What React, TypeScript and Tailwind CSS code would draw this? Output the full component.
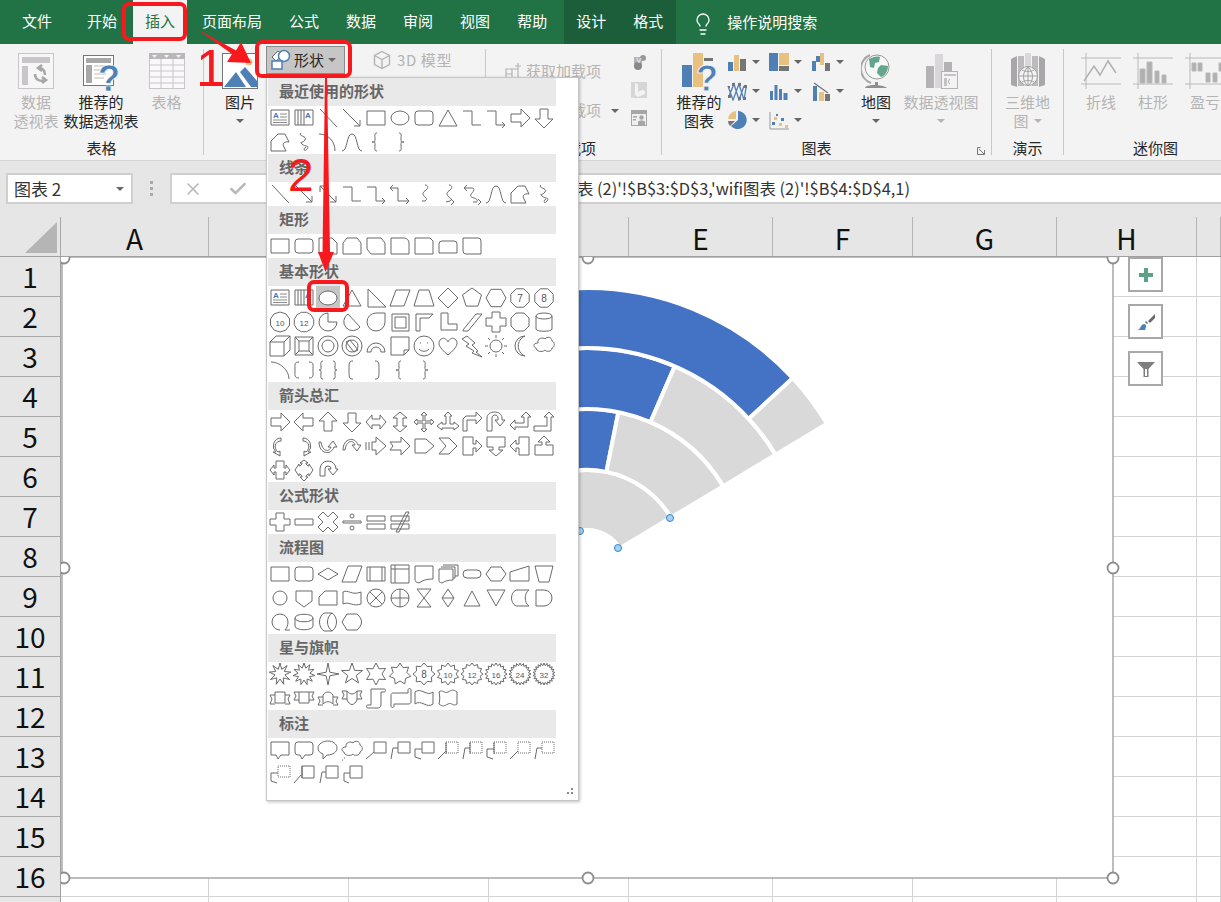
import React from "react";
import { Check, Lightbulb, X } from "lucide-react";

const BLUE = "#4e80b6";
const TAN = "#e8c07f";
const DARK = "#757575";

type Sh = string | { d: string; t?: string; dash?: string; tb?: boolean; fill?: boolean };

function poly(n: number, r = 9, rot = -90, cx = 12, cy = 12) {
  let d = "";
  for (let i = 0; i < n; i++) {
    const a = ((rot + (360 / n) * i) * Math.PI) / 180;
    d += `${i ? "L" : "M"}${(cx + r * Math.cos(a)).toFixed(1)} ${(cy + r * Math.sin(a)).toFixed(1)}`;
  }
  return d + "z";
}

function star(n: number, ro = 10, ri = 6) {
  let d = "";
  for (let i = 0; i < n * 2; i++) {
    const a = ((-90 + (180 / n) * i) * Math.PI) / 180;
    const r = i % 2 ? ri : ro;
    d += `${i ? "L" : "M"}${(12 + r * Math.cos(a)).toFixed(1)} ${(12 + r * Math.sin(a)).toFixed(1)}`;
  }
  return d + "z";
}

const circle = (r: number, cx = 12, cy = 12) =>
  `M${cx - r} ${cy}a${r} ${r} 0 1 0 ${r * 2} 0a${r} ${r} 0 1 0-${r * 2} 0`;

const tb: Sh = { d: "M3 4h18v15H3z", tb: true };
const vtb: Sh = { d: "M3 4h18v15H3zM6 4v15M9 4v15M12 4v15", t: "A" };
const line = "M4 3L21 21";
const arrow = "M3 3L20 20M20 14v6h-6";
const dbl = "M4 4L20 20M20 14v6h-6M4 10V4h6";
const rect = "M3 5h18v14H3z";
const ellipse = "M3 12a9 7 0 1 0 18 0a9 7 0 1 0-18 0";
const round = "M6 5h12a3 3 0 0 1 3 3v8a3 3 0 0 1-3 3H6a3 3 0 0 1-3-3V8a3 3 0 0 1 3-3z";
const tri = "M12 4L21 20H3z";
const elbow = "M3 5h9v14h9";
const elbowArr = "M3 5h9v14h8M18 16l3 3-3 3";
const elbowDbl = "M5 3L2 6l3 3M2 6h8v13h10M18 16l3 3-3 3";
const rA = "M3 8h10V3l9 9-9 9v-5H3z";
const lA = "M21 8H11V3l-9 9 9 9v-5h10z";
const uA = "M8 21V11H3l9-9 9 9h-5v10z";
const dA = "M8 3v10H3l9 9 9-9h-5V3z";
const free = "M3 21V11l7-7h7l4 8c-5-1-7 2-5 5l2 4z";
const scribble = "M9 3c-4 3 7 3 4 7s-6 1-3 4 8 1 5 5-4-1-1-2";
const arc = "M3 4c9 0 16 7 16 17";
const wave = "M2 21c6 0 4-17 10-17s4 17 10 17";
const lb = "M13 3c-3 0-2 3-2 6s0 3-3 3c3 0 3 0 3 3s-1 6 2 6";
const rb = "M11 3c3 0 2 3 2 6s0 3 3 3c-3 0-3 0-3 3s1 6-2 6";

const GROUPS: { title: string; rows: Sh[][] }[] = [
  {
    title: "最近使用的形状",
    rows: [
      [tb, vtb, line, arrow, rect, ellipse, round, tri, elbow, elbowArr, rA, dA],
      [free, scribble, arc, wave, lb, rb],
    ],
  },
  {
    title: "线条",
    rows: [
      [line, arrow, dbl, elbow, elbowArr, elbowDbl, "M13 3c3 0 4 3 1 5s-4 4-2 6 4 3 1 5h-3", "M13 3c3 0 4 3 1 5s-4 4-2 6 5 3 2 5l-4 1M15 17l3 3-3 3", "M7 3L4 6l3 3M4 6h8c3 0 2 3 0 5s-2 4 2 5 4 4 2 4h-3M18 17l3 3-3 3", wave, free, scribble],
    ],
  },
  {
    title: "矩形",
    rows: [
      [rect, round, "M3 4h13l5 5v11H3z", "M7 4h10l4 5v11H3V9z", "M3 4h14l4 5v11H7l-4-5z", "M3 4h13a5 5 0 0 1 5 5v11H3z", "M3 4h15l3 3v13H3z", "M6 7h12a3 3 0 0 1 3 3v9H3v-9a3 3 0 0 1 3-3z", "M3 4h15a3 3 0 0 1 3 3v13H6a3 3 0 0 1-3-3z"],
    ],
  },
  {
    title: "基本形状",
    rows: [
      [tb, vtb, { d: ellipse, fill: true }, tri, "M4 3v18h18z", "M8 4h14l-6 16H2z", "M7 4h10l5 16H2z", "M12 2L22 12 12 22 2 12z", poly(5, 10), poly(6, 10, 0), { d: poly(8, 10, 22.5), t: "7" }, { d: poly(8, 10, 22.5), t: "8" }],
      [{ d: poly(10, 10, 18), t: "10" }, { d: poly(12, 10, 15), t: "12" }, "M12 3a9 9 0 1 0 9 9h-9z", "M8 4l12 13A9 9 0 1 1 8 4z", "M21 3v9a9 9 0 1 1-9-9z", "M4 4h17v17H4zM7 7v11h11V7z", "M4 4h17l-4 4H8v13H4z", "M5 3h7v11h9v6H5z", "M3 20L16 4h6L8 21H3z", "M8 2h8v6h6v8h-6v6H8v-6H2V8h6z", "M8 3h8l5 5v8l-5 5H8l-5-5V8z", "M4 6c0-4 16-4 16 0v13c0 3-16 3-16 0zM4 6c0 4 16 4 16 0"],
      ["M2 8l6-6h14v14l-6 6H2zM2 8h14v14M16 8l6-6", "M3 3h18v18H3zM7 7h10v10H7zM3 3l4 4M21 3l-4 4M3 21l4-4M21 21l-4-4", circle(10) + circle(6), circle(10) + circle(6) + "M6 8l4-2 8 10-4 2z", "M3 18a9 9 0 0 1 18 0h-4a5 5 0 0 0-10 0z", "M3 3h18v13l-5 5H3zM16 21v-5h5", circle(10) + "M8 9h1M15 9h1M7 15c3 3 7 3 10 0", "M12 21C2 13 2 9 4 6c3-3 6-2 8 2 2-4 5-5 8-2 2 3 2 7-8 15z", "M7 2l8 7-3 2 6 6-2 1 6 5-10-4 2-2-8-5 3-2-7-5z", circle(6) + "M12 1v3M12 20v3M1 12h3M20 12h3M4 4l2 2M18 18l2 2M4 20l2-2M18 6l2-2", "M17 2a10 10 0 1 0 0 20c-9-4-9-16 0-20z", "M6 9c-1-5 5-6 7-4 2-3 7-2 7 2 3 1 3 6 0 7 0 4-6 4-7 2-3 3-9 1-9-2-3-1-3-5 2-5z"],
      ["M3 4c9 0 18 8 18 17", "M7 4c-5 0-4 3-4 8s-1 8 4 8M17 4c5 0 4 3 4 8s1 8-4 8", "M7 3c-3 0-2 3-2 6s0 3-2 3c2 0 2 0 2 3s-1 6 2 6M17 3c3 0 2 3 2 6s0 3 2 3c-2 0-2 0-2 3s1 6-2 6", "M13 3c-4 0-4 2-4 9s0 9 4 9", "M11 3c4 0 4 2 4 9s0 9-4 9", lb, rb],
    ],
  },
  {
    title: "箭头总汇",
    rows: [
      [rA, lA, uA, dA, "M2 12l6-7v4h8V5l6 7-6 7v-4H8v4z", "M12 2l7 6h-4v8h4l-7 6-7-6h4V8H5z", "M12 2l3 3h-2v6h6V9l3 3-3 3v-2h-6v6h2l-3 3-3-3h2v-6H5v2l-3-3 3-3v2h6V5H9z", "M12 2l4 4h-2v8h4v-2l5 4-5 4v-2H6v2l-5-4 5-4v2h4V6H8z", "M3 21V9l3-3h10V2l6 6-6 6v-4H7v11z", "M3 21V8c0-8 15-8 15 0v2h3l-5 6-5-6h3V8c0-4-6-4-6 0v13z", "M2 15l5-5v3h9V7h-3l5-5 5 5h-3v10H7v3z", "M2 21v-5h13V7h-3l5-5 5 5h-3v14z"],
      ["M13 4a8 8 0 0 0-5 14h-3l7 4v-5l-2 1c-5-4-3-11 3-11z", "M11 4a8 8 0 0 1 5 14h3l-7 4v-5l2 1c5-4 3-11-3-11z", "M3 8c0 12 12 14 15 5h3l-4-6-5 6h3c-2 6-9 4-10-5z", "M3 16C3 4 15 2 18 11h3l-4 6-5-6h3c-2-6-9-4-10 5z", "M2 8v8M5 8v8M8 8h4V3l10 9-10 9v-5H8z", "M2 8h11V3l9 9-9 9v-5H2l3-4z", "M3 5h11l8 7-8 7H3z", "M3 4h10l8 8-8 8H3l7-8z", "M3 3h10v7h3V6l6 6-6 6v-4h-3v7H3z", "M3 3h18v10h-6v3h4l-7 6-7-6h4v-3H3z", "M21 3H11v7H8V6l-6 6 6 6v-4h3v7h10z", "M3 21V11h7V8H6l6-6 6 6h-4v3h7v10z"],
      ["M8 3h8v7h2V7l4 5-4 5v-3h-2v7H8v-7H6v3l-4-5 4-5v3h2z", "M8 8l2-2V5H8l4-3 4 3h-2v1l2 2h1V6l4 6-4 6v-2h-1l-2 2v1h2l-4 4-4-4h2v-1l-2-2H7v2l-4-6 4-6v2z", "M4 18V11a8 8 0 0 1 16 0h2l-5 6-5-6h3a3 3 0 0 0-6 0v7z"],
    ],
  },
  {
    title: "公式形状",
    rows: [
      ["M8 3h8v6h6v6h-6v6H8v-6H2V9h6z", "M3 9h18v6H3z", "M7 2l5 5 5-5 5 5-5 5 5 5-5 5-5-5-5 5-5-5 5-5-5-5z", "M3 11h18v2H3z" + circle(2, 12, 6) + circle(2, 12, 18), "M3 6h18v5H3zM3 14h18v5H3z", "M3 6h18v5H3zM3 14h18v5H3zM8 22L18 2h3L11 22z"],
    ],
  },
  {
    title: "流程图",
    rows: [
      [rect, round, "M2 12l10-6 10 6-10 6z", "M8 4h14l-6 16H2z", "M3 5h18v14H3zM6 5v14M18 5v14", "M3 3h18v18H3zM3 7h18M7 3v18", "M3 4h18v13c-6 0-10 1-14 4-3-1-4-1-4-4z", "M7 3h15v11h-3M5 5h14v11h-2M3 7h14v11c-5 0-8 1-11 3-3-1-3-1-3-3z", "M7 8h10a4 4 0 0 1 0 8H7a4 4 0 0 1 0-8z", "M7 5h10l5 7-5 7H7l-5-7z", "M2 10L21 4v15H2z", "M3 4h18l-4 16H7z"],
      [circle(7), "M4 5h16v10l-8 6-8-6z", "M9 5h12v14H3v-8z", "M3 6c5-3 9 4 18 0v12c-8 3-12-3-18 0z", circle(9) + "M6 6l12 12M18 6L6 18", circle(9) + "M12 3v18M3 12h18", "M5 3h14L5 21h14z", "M12 3l6 9-6 9-6-9zM6 12h12", "M12 5l8 15H4z", "M3 4h18l-9 16z", "M8 4h13c-5 3-5 13 0 16H8C2 17 2 7 8 4z", "M4 4h8a8 8 0 0 1 0 16H4z"],
      ["M12 20a8 8 0 1 1 8-8c0 3-1 6-3 8h5", "M3 8c0-5 18-5 18 0v8c0 5-18 5-18 0zM3 8c0 5 18 5 18 0", "M8 3h8c6 4 6 14 0 18H8C2 17 2 7 8 3zM16 3c-6 4-6 14 0 18", "M7 4h10c6 5 6 11 0 16H7l-5-8z"],
    ],
  },
  {
    title: "星与旗帜",
    rows: [
      [star(9, 11, 5), star(11, 11, 6), star(4, 11, 2.5), star(5, 11, 4.5), star(6, 11, 6), star(7, 11, 7), { d: star(8, 11, 8), t: "8" }, { d: star(10, 11, 8), t: "10" }, { d: star(12, 11, 8.5), t: "12" }, { d: star(16, 11, 8.5), t: "16" }, { d: star(20, 11, 8.5), t: "24" }, { d: star(22, 11, 8.5), t: "32" }],
      ["M7 6h10v11H7zM7 9H2l2 4-2 5h5M17 9h5l-2 4 2 5h-5", "M7 6h10v11H7zM7 6H2l2 4-2 4h5M17 6h5l-2 4 2 4h-5", "M7 9c3-4 7-4 10 0v9c-3-3-7-3-10 0zM7 11H2l2 4-2 4h5M17 11h5l-2 4 2 4h-5", "M7 5c3 4 7 4 10 0v9c-3 6-7 6-10 0zM7 5H2l2 4-2 4h5M17 5h5l-2 4 2 4h-5", "M7 3h13c2 0 2 3 0 3h-3v13c0 2-2 3-3 3H4c-2 0-2-3 0-3h3z", "M5 7h15V4c0-2 3-2 3 0v12c0 1-1 2-3 2H6v2c0 2-3 2-3 0V9c0-1 1-2 2-2z", "M3 6c6-5 12 5 18 0v12c-6 5-12-5-18 0z", "M3 6c4-3 5 2 9 0s5-3 9 0v12c-4 3-5-2-9 0s-5 3-9 0c1-4 1-8 0-12z"],
    ],
  },
  {
    title: "标注",
    rows: [
      ["M3 4h18v13H13l-3 4-2-4H3z", "M6 4h12a3 3 0 0 1 3 3v7a3 3 0 0 1-3 3h-5l-3 4-2-4H6a3 3 0 0 1-3-3V7a3 3 0 0 1 3-3z", "M12 3c5 0 9 3 9 7s-4 7-10 7l-4 4v-5c-3-1-5-3-5-6 0-4 5-7 10-7z", "M6 9c-1-5 5-6 7-4 2-3 7-2 7 2 3 1 3 6 0 7 0 4-6 4-7 2-3 3-9 1-9-2-3-1-3-5 2-5zM4 20h1M2 22h1", "M10 4h12v11H10zM10 14L2 21", "M10 4h12v11H10zM10 10H5l-2 11", "M10 4h12v11H10zM10 11H3v8l6 2", { d: "M2 21l8-8M10 4v12", dash: "M10 4h12v11H10z" }, { d: "M3 21l2-11h5M10 4v12", dash: "M10 4h12v11H10z" }, { d: "M9 21l-6-2v-8h7M10 4v12", dash: "M10 4h12v11H10z" }, { d: "M2 21l8-8", dash: "M10 4h12v11H10z" }, { d: "M3 21l2-11h5", dash: "M10 4h12v11H10z" }],
      [{ d: "M9 21l-6-2v-8h7", dash: "M10 4h12v11H10z" }, "M10 4h12v12H10zM10 4v12M2 21l7-8", "M10 4h12v12H10zM6 10h4M4 21l2-11", "M10 4h12v12H10zM4 11h6M4 11v8l5 2"],
    ],
  },
];

const COLUMNS = [
  ["A", 148],
  ["B", 140],
  ["C", 140],
  ["D", 140],
  ["E", 144],
  ["F", 140],
  ["G", 144],
  ["H", 140],
  ["", 24],
] as const;

const sector = (r0: number, r1: number, a0: number, a1: number) => {
  const cx = 587;
  const cy = 568;
  const p = (r: number, a: number) => {
    const t = (a * Math.PI) / 180;
    return `${(cx + r * Math.cos(t)).toFixed(1)} ${(cy - r * Math.sin(t)).toFixed(1)}`;
  };
  return `M${p(r0, a0)}L${p(r1, a0)}A${r1} ${r1} 0 0 0 ${p(r1, a1)}L${p(r0, a1)}A${r0} ${r0} 0 0 1 ${p(r0, a0)}z`;
};

function Caret({ color = "#666" }: { color?: string }) {
  return (
    <svg width="8" height="4" viewBox="0 0 8 4" className="shrink-0">
      <path d="M0 0h8L4 4z" fill={color} />
    </svg>
  );
}

function Sep() {
  return <div className="mt-[5px] h-[106px] w-px shrink-0 bg-[#c8c8c8]" />;
}

function Big({
  width,
  icon,
  lines,
  muted,
  caret,
}: {
  width: number;
  icon: React.ReactNode;
  lines: string[];
  muted?: boolean;
  caret?: boolean;
}) {
  return (
    <div className="flex shrink-0 flex-col items-center pt-[8px]" style={{ width }}>
      <div className="flex h-[38px] items-center justify-center">{icon}</div>
      <div
        className={`mt-[2px] flex flex-col items-center whitespace-nowrap text-[15px] leading-[19px] ${
          muted ? "text-[#b4b4b4]" : "text-[#262626]"
        }`}
      >
        {lines.map((l) => (
          <span key={l}>{l}</span>
        ))}
        {caret && (
          <span className="flex h-[19px] items-center">
            <Caret color={muted ? "#b4b4b4" : "#666"} />
          </span>
        )}
      </div>
    </div>
  );
}

function GroupLabel({ children, className }: { children: React.ReactNode; className?: string }) {
  return (
    <div className={`absolute bottom-px left-0 right-0 text-center text-[15px] leading-[22px] text-[#262626] ${className ?? ""}`}>
      {children}
    </div>
  );
}

function SmallChart({ children }: { children: React.ReactNode }) {
  return (
    <div className="flex h-[29px] w-[42px] items-center gap-[5px]">
      <svg width="20" height="20" viewBox="0 0 20 20" className="shrink-0">
        {children}
      </svg>
      <Caret />
    </div>
  );
}

function ShapeIcon({ s }: { s: Sh }) {
  const o = typeof s === "string" ? { d: s } : s;
  return (
    <svg width="24" height="24" viewBox="0 0 24 24" fill="none" stroke="#6a6a6a" strokeWidth="1">
      <path d={o.d} fill={o.fill ? "#fff" : "none"} />
      {o.dash && <path d={o.dash} strokeDasharray="1 1" />}
      {o.tb && (
        <>
          <text x="8" y="12" fontSize="8" fontWeight="700" textAnchor="middle" fill="#3f77bf" stroke="none" fontFamily="Liberation Sans, sans-serif">
            A
          </text>
          <path d="M12 8h7M12 11h7M5 14h14M5 16.5h14" stroke="#8c8c8c" />
        </>
      )}
      {o.t === "A" ? (
        <text x="16" y="12" fontSize="8" fontWeight="700" textAnchor="middle" fill="#3f77bf" stroke="none" fontFamily="Liberation Sans, sans-serif">
          A
        </text>
      ) : (
        o.t && (
          <text x="12" y="15.5" fontSize={o.t.length > 1 ? 8 : 10} textAnchor="middle" fill="#555" stroke="none" fontFamily="Liberation Sans, sans-serif">
            {o.t}
          </text>
        )
      )}
    </svg>
  );
}

function ShapeMenu() {
  return (
    <div className="absolute left-[266px] top-[77px] z-10 h-[724px] w-[313px] border border-[#c6c6c6] bg-white shadow-[1px_1px_3px_rgba(0,0,0,0.25)]">
      <div className="w-[289px] pl-px">
        {GROUPS.map((g) => (
          <div key={g.title}>
            <div className="flex h-[28px] items-center bg-[#e9e9e9] pb-[3px] pl-[11px] text-[15px] font-bold leading-none text-[#666]">
              {g.title}
            </div>
            <div className="grid grid-cols-[repeat(12,24px)]">
              {g.rows.flat().map((s, i) => (
                <div
                  key={i}
                  className={`flex h-[24px] w-[24px] items-center justify-center ${
                    g.title === "基本形状" && i === 2 ? "bg-[#c6c6c6]" : ""
                  }`}
                >
                  <ShapeIcon s={s} />
                </div>
              ))}
            </div>
          </div>
        ))}
      </div>
      <svg width="10" height="10" viewBox="0 0 10 10" className="absolute bottom-[2px] right-[4px]" fill="#8a8a8a">
        <rect x="7" y="0" width="2" height="2" />
        <rect x="3" y="4" width="2" height="2" />
        <rect x="7" y="4" width="2" height="2" />
      </svg>
    </div>
  );
}

function Tabs() {
  const tab = "flex h-[44px] items-center px-3 pb-[2px] text-[15px] text-white";
  return (
    <div className="flex h-[44px] bg-[#217346]">
      <div className={`${tab} ml-[10px]`}>文件</div>
      <div className={`${tab} ml-[11px]`}>开始</div>
      <div className={`${tab} ml-[4px] bg-[#f3f3f3] !text-[#217346]`}>插入</div>
      <div className={`${tab} ml-[3px]`}>页面布局</div>
      <div className={`${tab} ml-[3px]`}>公式</div>
      <div className={`${tab} ml-[3px]`}>数据</div>
      <div className={`${tab} ml-[3px]`}>审阅</div>
      <div className={`${tab} ml-[3px]`}>视图</div>
      <div className={`${tab} ml-[3px]`}>帮助</div>
      <div className="ml-[5px] flex h-[44px] w-[112px] items-center bg-[#1b5e39] pb-[2px] pl-[12px] text-[15px] text-white">
        <span>设计</span>
        <span className="ml-[27px]">格式</span>
      </div>
      <Lightbulb className="ml-[15px] mt-[12px] h-[24px] w-[24px] text-white" strokeWidth={1.3} />
      <div className="ml-[12px] flex h-[44px] items-center text-[15px] text-white">操作说明搜索</div>
    </div>
  );
}

function Ribbon() {
  return (
    <div className="flex h-[116px] overflow-hidden bg-[#f3f3f3]">
      <div className="relative flex w-[203px] shrink-0">
        <Big
          width={72}
          muted
          lines={["数据", "透视表"]}
          icon={
            <svg width="36" height="36" viewBox="0 0 36 36">
              <rect x="0.5" y="0.5" width="35" height="35" fill="#f7f6f7" stroke="#c8c6c8" />
              <path d="M4 4h28v6H4zM4 13h6v19H4z" fill="#c8c6c8" />
              <path d="M17 21c0 6 5 8 11 6M27 22c0-5-3-7-7-7M24 12l-4 3 4 3M24 24l4 3-4 3" fill="none" stroke="#a8a6a8" strokeWidth="2.5" />
            </svg>
          }
        />
        <Big
          width={58}
          lines={["推荐的", "数据透视表"]}
          icon={
            <svg width="36" height="38" viewBox="0 0 36 38" className="overflow-visible">
              <rect x="0.5" y="3.5" width="30" height="30" fill="#fff" stroke="#757575" />
              <path d="M3 6h25v5H3zM3 13h6v18H3z" fill="#a8a8a8" />
              <path d="M11 14h16M11 18h14M11 22h12M11 26h10" stroke="#bbb" />
              <text x="26" y="39" fontSize="36" fontWeight="700" textAnchor="middle" fill={BLUE} stroke="#fff" strokeWidth="0.5" fontFamily="Liberation Sans, sans-serif">
                ?
              </text>
            </svg>
          }
        />
        <Big
          width={73}
          muted
          lines={["表格"]}
          icon={
            <svg width="36" height="36" viewBox="0 0 36 36">
              <rect x="0.5" y="0.5" width="35" height="35" fill="#faf8fa" stroke="#c8c6c8" />
              <rect x="0" y="0" width="36" height="6" fill="#b9b7b9" />
              <path d="M3 2h5L5.500 5zM15 2h5l-2.500 3zM27 2h5l-2.500 3z" fill="#f3f3f3" />
              <path d="M0 12h36M0 18h36M0 24h36M0 30h36M12 6v30M24 6v30" stroke="#c8c6c8" />
            </svg>
          }
        />
        <GroupLabel>表格</GroupLabel>
      </div>
      <Sep />
      <div className="relative flex w-[281px] shrink-0">
        <Big
          width={72}
          lines={["图片"]}
          caret
          icon={
            <svg width="36" height="36" viewBox="0 0 36 36">
              <rect x="0.5" y="0.5" width="35" height="35" fill="#fff" stroke="#757575" />
              <circle cx="27" cy="9" r="3.500" fill={TAN} />
              <path d="M2 34L14 19l10 15zM18 19l5-5 12 14v6h-6z" fill={BLUE} />
            </svg>
          }
        />
        <div className="ml-[-10px] mt-[2px] flex h-[28px] w-[79px] items-center gap-[2px] border border-[#8a8a8a] bg-[#c6c6c6] pl-[3px] text-[15px] text-[#262626]">
          <svg width="22" height="22" viewBox="0 0 22 22" className="shrink-0">
            <path d="M2 8l6-6 4 4-6 6z" fill="#fff" stroke="#666" />
            <circle cx="14" cy="7" r="5.500" fill="#fff" stroke={BLUE} strokeWidth="1.500" />
            <path d="M2 12h10v8H2z" fill="#fff" stroke={BLUE} strokeWidth="1.500" />
          </svg>
          形状
          <span className="ml-[2px]">
            <Caret />
          </span>
        </div>
        <div className="ml-[27px] mt-[5px] flex h-[22px] items-center gap-[5px] whitespace-nowrap text-[15px] text-[#b4b4b4]">
          <svg width="20" height="20" viewBox="0 0 20 20" fill="none" stroke="#b4b4b4" strokeWidth="1.400">
            <path d="M10 1.500l7.500 4v9l-7.500 4-7.500-4v-9zM2.500 5.500l7.500 4 7.500-4M10 9.500v9" />
          </svg>
          <span className="tracking-[0.6px]">3D 模型</span>
        </div>
      </div>
      <Sep />
      <div className="relative flex w-[175px] shrink-0">
        <div className="w-[115px] pl-[13px] text-[15px] text-[#b4b4b4]">
          <div className="mt-[17px] flex h-[20px] items-center justify-end gap-[3px] whitespace-nowrap">
            <svg width="18" height="18" viewBox="0 0 18 18" fill="none" stroke="#b4b4b4" strokeWidth="1.200" className="shrink-0">
              <path d="M1 7h6v5H1zM7 7h6v5M1 12v5h6v-5M7 17h6v-5M13 1v6M10 4h6" />
            </svg>
            获取加载项
          </div>
          <div className="mt-[19px] flex h-[20px] items-center justify-end whitespace-nowrap">我的加载项</div>
          <div className="mt-[18px] flex h-[20px] items-center justify-end whitespace-nowrap pr-[5px] text-[#262626]">加载项</div>
        </div>
        <div className="ml-[10px] mt-[65px]">
          <Caret />
        </div>
        <div className="ml-[11px] flex flex-col gap-[10px] pt-[9px]">
          <svg width="18" height="18" viewBox="0 0 18 18">
            <path d="M4 4h8v10H4z" fill="#b4b4b4" />
            <circle cx="13" cy="5" r="3" fill="#999" />
            <circle cx="8" cy="13" r="4" fill="#888" />
            <text x="6.500" y="10" fontSize="7" fill="#fff" fontFamily="Liberation Sans, sans-serif">V</text>
          </svg>
          <svg width="18" height="18" viewBox="0 0 18 18">
            <rect x="1" y="1" width="16" height="16" fill="#d6d6d6" />
            <path d="M5 2l3 1v8l4-2-2-1 5 2v3l-7 3-3-2z" fill="#f3f3f3" />
          </svg>
          <svg width="18" height="18" viewBox="0 0 18 18">
            <rect x="1" y="1" width="16" height="16" fill="#a6a6a6" />
            <rect x="2" y="5" width="14" height="11" fill="#f0f0f0" />
            <circle cx="11.500" cy="8.500" r="2.200" fill="#a6a6a6" />
            <path d="M8 17v-4c0-2 7-2 7 0v4zM3 7h4v1.500H3zM3 10h3v1.500H3z" fill="#a6a6a6" />
          </svg>
        </div>
      </div>
      <Sep />
      <div className="relative flex w-[329px] shrink-0">
        <Big
          width={74}
          lines={["推荐的", "图表"]}
          icon={
            <svg width="38" height="38" viewBox="0 0 38 38" className="overflow-visible">
              <path d="M2 13h10v22H2z" fill={BLUE} />
              <path d="M13 1h10v34H13z" fill={TAN} />
              <path d="M24 6h9v3h-9z" fill={DARK} />
              <text x="27" y="39" fontSize="36" fontWeight="700" textAnchor="middle" fill={BLUE} stroke="#f3f3f3" strokeWidth="0.8" fontFamily="Liberation Sans, sans-serif">
                ?
              </text>
            </svg>
          }
        />
        <div className="ml-[-9px] flex flex-col pt-[3px]">
          <SmallChart>
            <path d="M1 10h5v9H1z" fill={BLUE} />
            <path d="M7 3h5v16H7z" fill={TAN} />
            <path d="M13 7h6v12h-6z" fill={DARK} />
          </SmallChart>
          <SmallChart>
            <path d="M1 5l5 14 6-16 5 16 2-12M2 15l5-12 5 16 5-14" fill="none" stroke={BLUE} strokeWidth="1.300" />
            <path d="M1 5h2v2H1zM5 2h3v3H5zM11 2h3v3h-3zM17 4h3v3h-3zM1 14h3v3H1zM11 16h3v3h-3zM16 16h3v3h-3z" fill={DARK} />
          </SmallChart>
          <SmallChart>
            <path d="M11 1a9 9 0 1 1-7 15l7-6z" fill={BLUE} />
            <path d="M9 1a9 9 0 0 0-8 8h8z" fill={TAN} />
            <path d="M1 11h7l-5 5a8 8 0 0 1-2-5z" fill={DARK} />
          </SmallChart>
        </div>
        <div className="flex flex-col pt-[3px]">
          <SmallChart>
            <path d="M0 1h9v18H0z" fill={BLUE} />
            <path d="M10 1h10v12H10z" fill={TAN} />
            <path d="M10 14h10v5H10z" fill={DARK} />
          </SmallChart>
          <SmallChart>
            <path d="M1 10h3v9H1zM5.500 4h3v15h-3zM10 8h3v11h-3zM14.500 12h4v7h-4z" fill={BLUE} />
          </SmallChart>
          <SmallChart>
            <path d="M1 2v17h19" fill="none" stroke="#999" />
            <path d="M3 12h3v3H3zM12 8h3v3h-3zM7 4h2v2H7z" fill={BLUE} />
            <path d="M5 7h3v3H5zM10 13h3v3h-3zM16 15h3v3h-3z" fill={TAN} />
          </SmallChart>
        </div>
        <div className="flex flex-col pt-[3px]">
          <SmallChart>
            <path d="M1 9h4v10H1zM5 4h4v6H5z" fill={BLUE} />
            <path d="M9 1h4v12H9z" fill={TAN} />
            <path d="M14 11h5v8h-5z" fill={DARK} />
          </SmallChart>
          <SmallChart>
            <path d="M2 5h4v15H2z" fill={BLUE} />
            <path d="M8 11h5v9H8z" fill={TAN} />
            <path d="M14 13h5v7h-5z" fill={DARK} />
            <path d="M3 2l14 10" stroke={DARK} strokeWidth="1.300" />
          </SmallChart>
        </div>
        <Big
          width={46}
          lines={["地图"]}
          caret
          icon={
            <svg width="30" height="38" viewBox="0 0 30 38">
              <path d="M9 3a15 15 0 0 0 1 28" fill="none" stroke="#a6a6a6" strokeWidth="2" />
              <path d="M4 36c0-4 18-4 22 0zM14 30h3v4h-3z" fill="#8f8f8f" />
              <circle cx="16" cy="15" r="12" fill="#f5f8f7" stroke="#9a9a9a" />
              <path d="M8 7c4-2 8-3 11-2l-1 5-4 1-1 5-4-1zM20 13l7 1c0 5-3 10-7 11l-4-4 1-5z" fill="#64a58d" />
            </svg>
          }
        />
        <Big
          width={84}
          muted
          lines={["数据透视图"]}
          caret
          icon={
            <svg width="34" height="38" viewBox="0 0 34 38">
              <path d="M2 14h8v22H2z" fill="#b4b2b4" />
              <path d="M11 2h8v34h-8z" fill="#d9d6d9" />
              <path d="M20 10h8v12h-8z" fill="#b4b2b4" />
              <rect x="17.500" y="19.500" width="16" height="17" fill="#f3f3f3" stroke="#b4b2b4" />
              <path d="M20 22h12v2H20zM20 26h3v8h-3z" fill="#c4c2c4" />
              <path d="M26 27c-2 1-2 4 0 5" fill="none" stroke="#a0a0a0" />
            </svg>
          }
        />
        <GroupLabel className="pr-[20px]">图表</GroupLabel>
        <svg width="8" height="8" viewBox="0 0 8 8" className="absolute bottom-[5px] right-[6px]" fill="none" stroke="#777">
          <path d="M7.500 3v4.500H.5v-7h3M2 2l5 5" />
        </svg>
      </div>
      <Sep />
      <div className="relative flex w-[71px] shrink-0">
        <Big
          width={71}
          muted
          lines={["三维地"]}
          icon={
            <svg width="36" height="36" viewBox="0 0 36 36">
              <path d="M1 6l6-3v31l-6-2zM29 3l6 3v26l-6 2z" fill="#a8a6a8" />
              <path d="M8 3h6v30H8zM22 3h6v30h-6z" fill="#bdbbbd" />
              <path d="M15 0h6v20h-6z" fill="#d9d7d9" />
              <circle cx="18" cy="23" r="9.500" fill="#f3f3f3" stroke="#a0a0a0" />
              <path d="M9 23h18M18 14v19M12 17c4 2 8 2 12 0M12 29c4-2 8-2 12 0M18 14c-6 5-6 14 0 19M18 14c6 5 6 14 0 19" fill="none" stroke="#a0a0a0" />
            </svg>
          }
        />
        <div className="absolute left-0 right-0 top-[67px] flex h-[19px] items-center justify-center gap-[5px] text-[15px] leading-[19px] text-[#b4b4b4]">
          图
          <Caret color="#b4b4b4" />
        </div>
        <GroupLabel>演示</GroupLabel>
      </div>
      <Sep />
      <div className="relative flex flex-1 pl-[11px]">
        {[
          { label: "折线", g: <path d="M3 28l10-15 6 9 8-14 8 12" fill="none" stroke="#b0b0b0" strokeWidth="1.500" /> },
          { label: "柱形", g: <path d="M7 16h5v14H7zM14 9h5v21h-5zM22 18h4v12h-4zM29 22h4v8h-4z" fill="#b0b0b0" /> },
          { label: "盈亏", g: <path d="M7 10h4v8H7zM13 10h4v8h-4zM21 20h4v9h-4zM28 20h4v9h-4zM34 10h4v8h-4z" fill="#b0b0b0" /> },
        ].map((s) => (
          <Big
            key={s.label}
            width={52}
            muted
            lines={[s.label]}
            icon={
              <svg width="40" height="36" viewBox="0 0 40 36" fill="none" stroke="#b9b9b9">
                <path d="M0 5h40M0 31h40M5 0v36" />
                {s.g}
              </svg>
            }
          />
        ))}
        <GroupLabel className="pl-[16px]">迷你图</GroupLabel>
      </div>
    </div>
  );
}

function FormulaBar() {
  return (
    <div className="flex h-[57px] border-t border-[#d4d4d4] bg-[#e6e6e6] pt-[12px]">
      <div className="ml-[6px] flex h-[31px] w-[127px] items-center justify-between border-2 border-[#cfcfcf] bg-white pl-[6px] pr-[7px] text-[17px] text-[#333]">
        图表 2
        <Caret />
      </div>
      <div className="ml-[17px] flex h-[31px] flex-col justify-center gap-[3px]">
        <span className="h-[3px] w-[3px] bg-[#aaa]" />
        <span className="h-[3px] w-[3px] bg-[#aaa]" />
        <span className="h-[3px] w-[3px] bg-[#aaa]" />
      </div>
      <div className="ml-[17px] flex h-[31px] flex-1 items-center border-2 border-r-0 border-[#cfcfcf] bg-white text-[16.4px] text-[#333]">
        <X className="ml-[11px] h-[20px] w-[20px] text-[#b8b8b8]" strokeWidth={2} />
        <Check className="ml-[25px] h-[20px] w-[20px] text-[#b8b8b8]" strokeWidth={3} />
        <span className="ml-[329px] whitespace-nowrap">表 (2)'!$B$3:$D$3,'wifi图表 (2)'!$B$4:$D$4,1)</span>
      </div>
    </div>
  );
}

function ColumnHeader() {
  return (
    <div className="flex h-[40px] border-b border-[#a0a0a0] bg-[#e6e6e6]">
      <div className="relative w-[61px] shrink-0 border-r border-[#a8a8a8]">
        <div className="absolute bottom-[3px] right-[3px] h-0 w-0 border-b-[31px] border-l-[32px] border-b-[#b5b5b5] border-l-transparent" />
      </div>
      {COLUMNS.map(([c, w], i) => (
        <div
          key={i}
          className="flex shrink-0 items-center justify-center border-r border-[#b4b4b4] pt-[2px] text-[28px] leading-none text-[#111]"
          style={{ width: w }}
        >
          {c}
        </div>
      ))}
    </div>
  );
}

function Chart() {
  const handles: [number, number][] = [
    [64, 258],
    [588, 258],
    [1113, 258],
    [64, 568],
    [1113, 568],
    [64, 878],
    [588, 878],
    [1113, 878],
  ];
  return (
    <svg className="absolute inset-0" width="1160" height="645" viewBox="61 257 1160 645">
      <rect x="62" y="257" width="1051" height="621" fill="#fff" stroke="#a6a6a6" strokeWidth="1.500" />
      <g stroke="#fff" strokeWidth="4">
        <path d={sector(38, 98, 31, 149)} fill="#d9d9d9" />
        <path d={sector(98, 159, 78.6, 149)} fill="#4472c4" />
        <path d={sector(98, 159, 31, 78.6)} fill="#d9d9d9" />
        <path d={sector(159, 220, 66.5, 149)} fill="#4472c4" />
        <path d={sector(159, 220, 31, 66.5)} fill="#d9d9d9" />
        <path d={sector(220, 280, 42.7, 149)} fill="#4472c4" />
        <path d={sector(220, 280, 31, 42.7)} fill="#d9d9d9" />
      </g>
      {handles.map(([x, y]) => (
        <circle key={`${x}-${y}`} cx={x} cy={y} r="5.500" fill="#fff" stroke="#8c8c8c" strokeWidth="1.800" />
      ))}
      {[
        [580, 531],
        [618, 548],
        [670, 518],
      ].map(([x, y]) => (
        <circle key={x} cx={x} cy={y} r="3.500" fill="#a9d0ee" stroke="#2a86d8" />
      ))}
    </svg>
  );
}

function ChartButtons() {
  const box = "flex h-[35px] w-[35px] items-center justify-center border-2 border-[#a8a8a8] bg-white";
  return (
    <div className="absolute left-[1067px] top-0 flex flex-col gap-[12px]">
      <div className={box}>
        <svg width="16" height="16" viewBox="0 0 16 16">
          <path d="M6 1h4v5h5v4h-5v5H6v-5H1V6h5z" fill="#5ba287" />
        </svg>
      </div>
      <div className={box}>
        <svg width="20" height="20" viewBox="0 0 20 20">
          <path d="M12 9l7-7v4l-5 5z" fill="#6a6a6a" />
          <path d="M10 9l2 2-1 1-2-2z" fill="#6a6a6a" />
          <path d="M1 18c3 0 3-3 5-5s4-1 4 1-1 4-1 4z" fill="#4e80b6" />
        </svg>
      </div>
      <div className={box}>
        <svg width="20" height="20" viewBox="0 0 20 20">
          <path d="M1 3h18l-6.500 7v8h-5v-8z" fill="#7f7f7f" />
          <path d="M9 10v7h2v-7" fill="#fff" />
        </svg>
      </div>
    </div>
  );
}

function Sheet() {
  return (
    <div className="flex h-[645px] overflow-hidden">
      <div className="w-[61px] shrink-0 bg-[#e6e6e6]">
        {Array.from({ length: 17 }, (_, i) => (
          <div
            key={i}
            className="flex h-[40px] items-center justify-center border-b border-r border-b-[#a8a8a8] border-r-[#a0a0a0] pb-[2px] text-[28px] leading-none text-[#111]"
          >
            {i < 16 ? i + 1 : ""}
          </div>
        ))}
      </div>
      <div className="relative flex-1 overflow-hidden bg-white">
        {Array.from({ length: 17 }, (_, r) => (
          <div key={r} className="flex h-[40px]">
            {COLUMNS.map(([, w], c) => (
              <div key={c} className="shrink-0 border-b border-r border-[#d4d4d4]" style={{ width: w }} />
            ))}
          </div>
        ))}
        <Chart />
        <ChartButtons />
      </div>
    </div>
  );
}

function Annotations() {
  return (
    <>
      <svg className="pointer-events-none absolute inset-0 z-20" width="1221" height="902" viewBox="0 0 1221 902" fill="none">
        <rect x="124" y="4" width="61" height="35" rx="5" stroke="#f7191d" strokeWidth="4" />
        <rect x="257" y="42" width="93" height="34" rx="5" stroke="#f7191d" strokeWidth="4" />
        <rect x="309" y="282" width="38" height="28" rx="5" stroke="#f7191d" strokeWidth="4" />
        <path d="M197 29L236 50.500L241 42L251 63L227 62L232 54z" fill="#f7191d" />
        <path d="M325 78h2L330 252H334L325.500 272L318 252H322.500z" fill="#f7191d" />
      </svg>
      <div className="pointer-events-none absolute left-[196px] top-[38px] z-20 font-['Liberation_Sans',sans-serif] text-[52px] font-light leading-[60px] text-[#f7191d]">
        1
      </div>
      <div className="pointer-events-none absolute left-[288px] top-[147px] z-20 font-['Liberation_Sans',sans-serif] text-[46px] leading-[56px] text-[#f7191d]">
        2
      </div>
    </>
  );
}

export default function App() {
  return (
    <div className="relative h-[902px] w-[1221px] overflow-hidden bg-white font-['Noto_Sans_CJK_SC','Liberation_Sans',sans-serif]">
      <Tabs />
      <Ribbon />
      <FormulaBar />
      <ColumnHeader />
      <Sheet />
      <ShapeMenu />
      <Annotations />
    </div>
  );
}
